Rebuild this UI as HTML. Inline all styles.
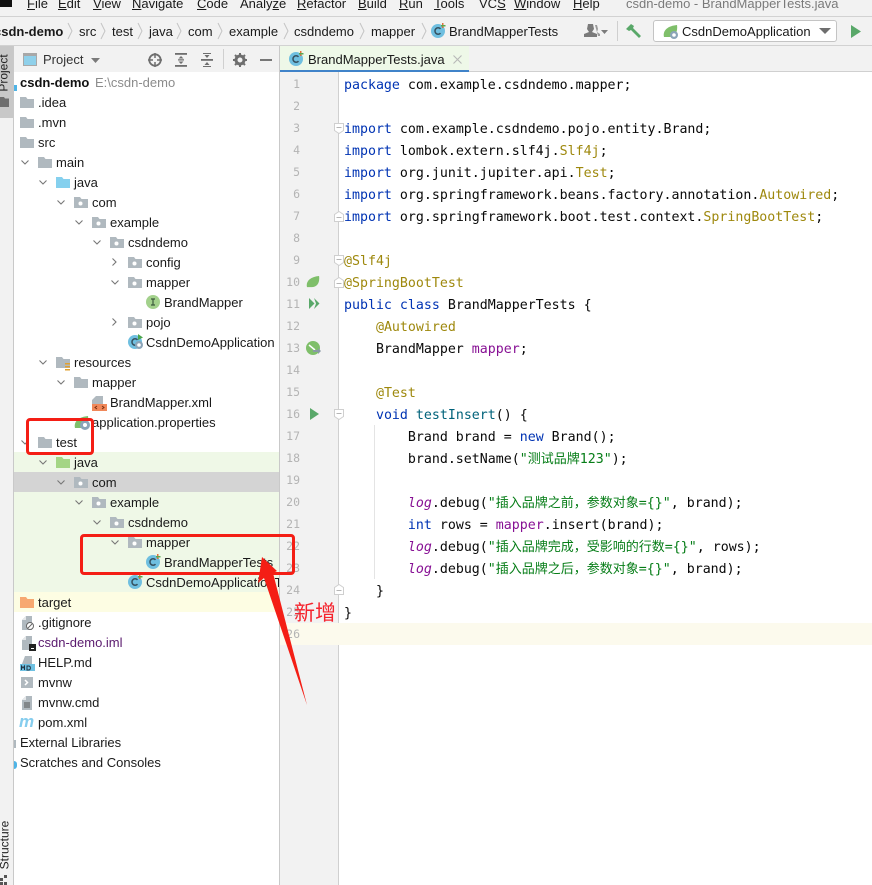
<!DOCTYPE html>
<html style="width:872px;height:885px;overflow:hidden"><head><meta charset="utf-8"><style>
html,body{margin:0;padding:0}
body{width:872px;height:885px;position:relative;overflow:hidden;background:#f2f2f2;font:13px/20px "Liberation Sans","Noto Sans CJK SC",sans-serif;color:#1a1a1a}
.b{position:absolute}
.t{position:absolute;white-space:pre;height:20px;line-height:20px}
#tree .t{margin-top:1px}
svg.i{position:absolute;overflow:visible}
#tree{position:absolute;left:0;top:0;width:279px;height:885px;overflow:hidden}
#code{position:absolute;left:344px;top:75px;width:528px;height:572px;overflow:hidden;font:13.28px/22px "DejaVu Sans Mono",monospace;color:#080808}
#code div{height:22px;white-space:pre;overflow:visible}
#nums{position:absolute;left:280px;top:73px;width:20px;text-align:right;font:11.5px/22px "DejaVu Sans Mono",monospace;color:#b4b4b4}
#nums div{height:22px}
.k{color:#0033b3}.a{color:#9e880d}.s{color:#067d17}.f{color:#871094}.m{color:#00627a}
.c{font:13px/0 "Noto Sans CJK SC",sans-serif;color:#067d17}
.lg{color:#871094;font-style:italic}
u{text-underline-offset:1px}
</style></head><body>
<svg width="0" height="0" style="position:absolute"><defs>
<symbol id="fo" viewBox="0 0 14 11"><path d="M0 0h6l1.500 2H14v9H0z" fill="#b0b9bf"/></symbol>
<symbol id="pk" viewBox="0 0 14 11"><path d="M0 0h6l1.500 2H14v9H0z" fill="#b0b9bf"/><circle cx="6.500" cy="6.500" r="2" fill="#fff"/></symbol>
<symbol id="jv" viewBox="0 0 14 11"><path d="M0 0h6l1.500 2H14v9H0z" fill="#85d0ee"/></symbol>
<symbol id="jt" viewBox="0 0 14 11"><path d="M0 0h6l1.500 2H14v9H0z" fill="#a4d585"/></symbol>
<symbol id="or" viewBox="0 0 14 11"><path d="M0 0h6l1.500 2H14v9H0z" fill="#f7a871"/></symbol>
<symbol id="dn" viewBox="0 0 8 5"><path d="M.5.500 4 4 7.500.500" fill="none" stroke="#777" stroke-width="1.100"/></symbol>
<symbol id="rt" viewBox="0 0 5 8"><path d="M.5.500 4 4 .5 7.500" fill="none" stroke="#777" stroke-width="1.100"/></symbol>
<symbol id="cl" viewBox="0 0 15 15"><circle cx="7" cy="8" r="7" fill="#6fbfe0"/><path d="M9.500 5.800A3.200 3.200 0 1 0 9.500 10.200" fill="none" stroke="#35505e" stroke-width="1.500"/><path d="M11 0h1.500v5H11z" fill="#e0703c"/><path d="M10 2h4.500v1.500H10z" fill="#5aa84f"/></symbol>
<symbol id="ap" viewBox="0 0 16 15"><circle cx="7" cy="8" r="7" fill="#6fbfe0"/><path d="M9.500 5.800A3.200 3.200 0 1 0 9.500 10.200" fill="none" stroke="#35505e" stroke-width="1.500"/><path d="M10 0l5 3.500L10 6z" fill="#4ca64c"/><circle cx="11" cy="11" r="4" fill="#8ba4b8"/><circle cx="11" cy="11" r="1.800" fill="#fff"/></symbol>
<symbol id="sp" viewBox="0 0 16 14"><path d="M1 12C-.5 6 4 1 14 0c1 7-2 12-8 12-2 0-3.500 0-5 0z" fill="#7fbf6a"/></symbol>
<symbol id="fd" viewBox="0 0 10 11"><path d="M.5.500h9v7L5 10.500.5 7.500z" fill="#fff" stroke="#cfcfcf"/><path d="M2.500 4.500h5" stroke="#b5b5b5"/></symbol>
<symbol id="fu" viewBox="0 0 10 11"><path d="M.5 10.500h9v-7L5 .5.500 3.500z" fill="#fff" stroke="#cfcfcf"/><path d="M2.500 6.500h5" stroke="#b5b5b5"/></symbol>
<symbol id="doc" viewBox="0 0 10 14"><path d="M4 0h6v14H0V4z" fill="#b0b9bf"/><path d="M4 0v4H0z" fill="#e4e7e9"/></symbol>
</defs></svg>

<!-- menu bar -->
<div class="b" style="left:0;top:0;width:872px;height:16px;background:#f2f2f2;overflow:hidden">
<div class="b" style="left:0;top:0;width:12px;height:7px;background:#111"></div>
<span class="t" style="left:27px;top:-6px"><u>F</u>ile</span>
<span class="t" style="left:58px;top:-6px"><u>E</u>dit</span>
<span class="t" style="left:93px;top:-6px"><u>V</u>iew</span>
<span class="t" style="left:132px;top:-6px"><u>N</u>avigate</span>
<span class="t" style="left:197px;top:-6px"><u>C</u>ode</span>
<span class="t" style="left:240px;top:-6px">Analy<u>z</u>e</span>
<span class="t" style="left:297px;top:-6px"><u>R</u>efactor</span>
<span class="t" style="left:358px;top:-6px"><u>B</u>uild</span>
<span class="t" style="left:399px;top:-6px"><u>R</u>un</span>
<span class="t" style="left:434px;top:-6px"><u>T</u>ools</span>
<span class="t" style="left:479px;top:-6px">VC<u>S</u></span>
<span class="t" style="left:514px;top:-6px"><u>W</u>indow</span>
<span class="t" style="left:573px;top:-6px"><u>H</u>elp</span>
<span class="t" style="left:626px;top:-6px;color:#7a7a7a">csdn-demo - BrandMapperTests.java</span>
</div>
<div class="b" style="left:0;top:16px;width:872px;height:1px;background:#d2d2d2"></div>

<!-- breadcrumb -->
<span class="t" style="left:-6px;top:22px;font-weight:bold">csdn-demo</span>
<span class="t" style="left:79px;top:22px">src</span>
<span class="t" style="left:112px;top:22px">test</span>
<span class="t" style="left:149px;top:22px">java</span>
<span class="t" style="left:188px;top:22px">com</span>
<span class="t" style="left:229px;top:22px">example</span>
<span class="t" style="left:294px;top:22px">csdndemo</span>
<span class="t" style="left:371px;top:22px">mapper</span>
<span class="t" style="left:449px;top:22px">BrandMapperTests</span>
<svg class="i" style="left:0;top:17px" width="440" height="28" fill="none" stroke="#c4c4c4" stroke-width="1"><path d="M68 6l4 8-4 8M101 6l4 8-4 8M138 6l4 8-4 8M177 6l4 8-4 8M218 6l4 8-4 8M284 6l4 8-4 8M360 6l4 8-4 8M422 6l4 8-4 8"/></svg>
<svg class="i" style="left:431px;top:23px" width="15" height="15"><use href="#cl"/></svg>
<svg class="i" style="left:584px;top:24px" width="26" height="14"><path d="M4 0h5l1 5-2 3 5 2v3H0v-3l5-2-2-3z" fill="#7b7b7b"/><path d="M11 1h2l1 4-1 3 3 2v2h-2" fill="#9a9a9a"/><path d="M17 6h7l-3.500 4z" fill="#7b7b7b"/></svg>
<div class="b" style="left:617px;top:21px;width:1px;height:20px;background:#cfcfcf"></div>
<svg class="i" style="left:626px;top:24px" width="16" height="15"><path d="M0 5 5 0l3 2-1 2 8 8-2 2-8-8-2 1z" fill="#59a869"/></svg>
<div class="b" style="left:653px;top:20px;width:182px;height:20px;background:#fff;border:1px solid #c4c4c4;border-radius:3px"></div>
<svg class="i" style="left:663px;top:25px" width="16" height="14"><use href="#sp"/><circle cx="11" cy="10" r="4" fill="#8ba4b8"/><circle cx="11" cy="10" r="1.800" fill="#fff"/></svg>
<span class="t" style="left:682px;top:22px">CsdnDemoApplication</span>
<svg class="i" style="left:819px;top:28px" width="12" height="6"><path d="M0 0h12L6 6z" fill="#6e6e6e"/></svg>
<svg class="i" style="left:851px;top:25px" width="10" height="13"><path d="M0 0l10 6.500L0 13z" fill="#59a869"/></svg>
<div class="b" style="left:0;top:45px;width:872px;height:1px;background:#d2d2d2"></div>

<!-- project header -->
<svg class="i" style="left:23px;top:53px" width="14" height="13"><rect x=".5" y=".5" width="13" height="12" fill="#8fd0ea" stroke="#a8a8a8"/><rect x="1" y="1" width="12" height="2" fill="#a8a8a8"/></svg>
<span class="t" style="left:43px;top:50px;color:#333">Project</span>
<svg class="i" style="left:91px;top:58px" width="9" height="5"><path d="M0 0h9L4.500 5z" fill="#7a7a7a"/></svg>
<svg class="i" style="left:148px;top:53px" width="14" height="14"><circle cx="7" cy="7" r="5.700" fill="none" stroke="#6e6e6e" stroke-width="1.800"/><path d="M7 0v5M7 9v5M0 7h5M9 7h5" stroke="#6e6e6e" stroke-width="1.500"/></svg>
<svg class="i" style="left:175px;top:53px" width="13" height="14" fill="#6e6e6e"><rect width="12" height="1.800"/><rect y="12" width="12" height="1.800"/><path d="M6 3l2.500 2.500h-5zM6 11 3.500 8.500h5zM3 6.300h6v1.200H3z"/></svg>
<svg class="i" style="left:201px;top:53px" width="13" height="14" fill="#6e6e6e"><rect y="6" width="12" height="1.800"/><path d="M6 5 3.500 2h5zM6 9l2.500 3h-5z"/><rect x="2" y="0" width="8" height="1"/><rect x="2" y="13" width="8" height="1"/></svg>
<div class="b" style="left:223px;top:49px;width:1px;height:20px;background:#d0d0d0"></div>
<svg class="i" style="left:233px;top:53px" width="14" height="14"><circle cx="7" cy="7" r="4" fill="none" stroke="#6e6e6e" stroke-width="3"/><path d="M7 0v3M7 11v3M0 7h3M11 7h3M2 2l2 2M10 10l2 2M12 2l-2 2M4 10l-2 2" stroke="#6e6e6e" stroke-width="2"/></svg>
<div class="b" style="left:260px;top:59px;width:12px;height:2px;background:#777"></div>

<!-- tree -->
<div class="b" style="left:14px;top:72px;width:265px;height:813px;background:#fff"></div>
<div class="b" style="left:279px;top:46px;width:1px;height:839px;background:#c9c9c9"></div>
<div class="b" style="left:14px;top:452px;width:265px;height:140px;background:#eff8e7"></div>
<div class="b" style="left:14px;top:472px;width:265px;height:20px;background:#d4d4d4"></div>
<div class="b" style="left:14px;top:592px;width:265px;height:20px;background:#fdfde3"></div>
<div id="tree">
<span class="t" style="left:20px;top:72px;font-weight:bold;color:#111">csdn-demo</span>
<span class="t" style="left:95px;top:72px;color:#8c8c8c">E:\csdn-demo</span>
<div class="b" style="left:14px;top:85px;width:3px;height:6px;background:#4fb4e6"></div>
<span class="t" style="left:38px;top:92px">.idea</span>
<span class="t" style="left:38px;top:112px">.mvn</span>
<span class="t" style="left:38px;top:132px">src</span>
<span class="t" style="left:56px;top:152px">main</span>
<span class="t" style="left:74px;top:172px">java</span>
<span class="t" style="left:92px;top:192px">com</span>
<span class="t" style="left:110px;top:212px">example</span>
<span class="t" style="left:128px;top:232px">csdndemo</span>
<span class="t" style="left:146px;top:252px">config</span>
<span class="t" style="left:146px;top:272px">mapper</span>
<span class="t" style="left:164px;top:292px">BrandMapper</span>
<span class="t" style="left:146px;top:312px">pojo</span>
<span class="t" style="left:146px;top:332px">CsdnDemoApplication</span>
<span class="t" style="left:74px;top:352px">resources</span>
<span class="t" style="left:92px;top:372px">mapper</span>
<span class="t" style="left:110px;top:392px">BrandMapper.xml</span>
<span class="t" style="left:92px;top:412px">application.properties</span>
<span class="t" style="left:56px;top:432px">test</span>
<span class="t" style="left:74px;top:452px">java</span>
<span class="t" style="left:92px;top:472px">com</span>
<span class="t" style="left:110px;top:492px">example</span>
<span class="t" style="left:128px;top:512px">csdndemo</span>
<span class="t" style="left:146px;top:532px">mapper</span>
<span class="t" style="left:164px;top:552px">BrandMapperTests</span>
<span class="t" style="left:146px;top:572px">CsdnDemoApplicationT</span>
<span class="t" style="left:38px;top:592px">target</span>
<span class="t" style="left:38px;top:612px">.gitignore</span>
<span class="t" style="left:38px;top:632px;color:#5a1a6e">csdn-demo.iml</span>
<span class="t" style="left:38px;top:652px">HELP.md</span>
<span class="t" style="left:38px;top:672px">mvnw</span>
<span class="t" style="left:38px;top:692px">mvnw.cmd</span>
<span class="t" style="left:38px;top:712px">pom.xml</span>
<span class="t" style="left:20px;top:732px">External Libraries</span>
<span class="t" style="left:20px;top:752px">Scratches and Consoles</span>

<svg class="i" style="left:20px;top:97px" width="14" height="11"><use href="#fo"/></svg>
<svg class="i" style="left:20px;top:117px" width="14" height="11"><use href="#fo"/></svg>
<svg class="i" style="left:20px;top:137px" width="14" height="11"><use href="#fo"/></svg>
<svg class="i" style="left:38px;top:157px" width="14" height="11"><use href="#fo"/></svg>
<svg class="i" style="left:56px;top:177px" width="14" height="11"><use href="#jv"/></svg>
<svg class="i" style="left:74px;top:197px" width="14" height="11"><use href="#pk"/></svg>
<svg class="i" style="left:92px;top:217px" width="14" height="11"><use href="#pk"/></svg>
<svg class="i" style="left:110px;top:237px" width="14" height="11"><use href="#pk"/></svg>
<svg class="i" style="left:128px;top:257px" width="14" height="11"><use href="#pk"/></svg>
<svg class="i" style="left:128px;top:277px" width="14" height="11"><use href="#pk"/></svg>
<svg class="i" style="left:146px;top:295px" width="14" height="14"><circle cx="7" cy="7" r="7" fill="#a3d18c"/><path d="M5 4h4M5 10h4M7 4v6" stroke="#3c5a3c" stroke-width="1.200"/></svg>
<svg class="i" style="left:128px;top:317px" width="14" height="11"><use href="#pk"/></svg>
<svg class="i" style="left:128px;top:334px" width="16" height="15"><use href="#ap"/></svg>
<svg class="i" style="left:56px;top:357px" width="14" height="14"><path d="M0 0h6l1.500 2H14v9H7v0H0z" fill="#b0b9bf"/><path d="M9 6h5v1.500H9zM9 9h5v1.500H9zM9 12h5v1.500H9z" fill="#e0a030"/></svg>
<svg class="i" style="left:74px;top:377px" width="14" height="11"><use href="#fo"/></svg>
<svg class="i" style="left:92px;top:396px" width="15" height="15"><path d="M4 0h7v8H0V4z" fill="#b0b9bf"/><rect y="8" width="15" height="7" fill="#f0885a"/><path d="M5 10l-2 1.500L5 13M10 10l2 1.500L10 13" fill="none" stroke="#7a2e10"/></svg>
<svg class="i" style="left:74px;top:416px" width="16" height="14"><use href="#sp"/><circle cx="11" cy="9" r="5" fill="#8ba4b8"/><circle cx="11" cy="9" r="2" fill="#fff"/></svg>
<svg class="i" style="left:38px;top:437px" width="14" height="11"><use href="#fo"/></svg>
<svg class="i" style="left:56px;top:457px" width="14" height="11"><use href="#jt"/></svg>
<svg class="i" style="left:74px;top:477px" width="14" height="11"><use href="#pk"/></svg>
<svg class="i" style="left:92px;top:497px" width="14" height="11"><use href="#pk"/></svg>
<svg class="i" style="left:110px;top:517px" width="14" height="11"><use href="#pk"/></svg>
<svg class="i" style="left:128px;top:537px" width="14" height="11"><use href="#pk"/></svg>
<svg class="i" style="left:146px;top:554px" width="15" height="15"><use href="#cl"/></svg>
<svg class="i" style="left:128px;top:574px" width="15" height="15"><use href="#cl"/></svg>
<svg class="i" style="left:20px;top:597px" width="14" height="11"><use href="#or"/></svg>
<svg class="i" style="left:22px;top:616px" width="14" height="15"><use href="#doc" width="10" height="14"/><circle cx="8" cy="10" r="3.500" fill="#fff" stroke="#666"/><path d="M6 12l4-4" stroke="#666"/></svg>
<svg class="i" style="left:22px;top:636px" width="14" height="15"><use href="#doc" width="10" height="14"/><rect x="7" y="8" width="7" height="7" fill="#222"/><rect x="9" y="12" width="3" height="1" fill="#fff"/></svg>
<svg class="i" style="left:20px;top:656px" width="15" height="15"><path d="M5 0h7v8H2z" fill="#b0b9bf"/><rect y="8" width="15" height="7" fill="#6fc1e2"/><path d="M1.500 14v-4l1.500 2 1.500-2v4M7 10v4h1.500c2.500 0 2.500-4 0-4z" fill="none" stroke="#234"/></svg>
<svg class="i" style="left:21px;top:677px" width="12" height="11"><rect width="12" height="11" fill="#b0b9bf"/><path d="M4 3l2.500 2.500L4 8" fill="none" stroke="#fff" stroke-width="1.500"/></svg>
<svg class="i" style="left:22px;top:696px" width="10" height="14"><use href="#doc"/><path d="M2 7h6M2 9h6M2 11h6" stroke="#555"/></svg>
<span class="t" style="left:19px;top:712px;font:italic bold 17px/18px 'Liberation Sans',sans-serif;color:#85cdee">m</span>
<div class="b" style="left:14px;top:740px;width:2px;height:8px;background:#b0b9bf"></div>
<div class="b" style="left:14px;top:761px;width:3px;height:8px;border-radius:0 4px 4px 0;background:#4fb4e6"></div>

<svg class="i" style="left:21px;top:160px" width="8" height="5"><use href="#dn"/></svg>
<svg class="i" style="left:39px;top:180px" width="8" height="5"><use href="#dn"/></svg>
<svg class="i" style="left:57px;top:200px" width="8" height="5"><use href="#dn"/></svg>
<svg class="i" style="left:75px;top:220px" width="8" height="5"><use href="#dn"/></svg>
<svg class="i" style="left:93px;top:240px" width="8" height="5"><use href="#dn"/></svg>
<svg class="i" style="left:112px;top:258px" width="5" height="8"><use href="#rt"/></svg>
<svg class="i" style="left:111px;top:280px" width="8" height="5"><use href="#dn"/></svg>
<svg class="i" style="left:112px;top:318px" width="5" height="8"><use href="#rt"/></svg>
<svg class="i" style="left:39px;top:360px" width="8" height="5"><use href="#dn"/></svg>
<svg class="i" style="left:57px;top:380px" width="8" height="5"><use href="#dn"/></svg>
<svg class="i" style="left:21px;top:440px" width="8" height="5"><use href="#dn"/></svg>
<svg class="i" style="left:39px;top:460px" width="8" height="5"><use href="#dn"/></svg>
<svg class="i" style="left:57px;top:480px" width="8" height="5"><use href="#dn"/></svg>
<svg class="i" style="left:75px;top:500px" width="8" height="5"><use href="#dn"/></svg>
<svg class="i" style="left:93px;top:520px" width="8" height="5"><use href="#dn"/></svg>
<svg class="i" style="left:111px;top:540px" width="8" height="5"><use href="#dn"/></svg>
</div>

<!-- left strip -->
<div class="b" style="left:0;top:46px;width:13px;height:839px;background:#f2f2f2"></div>
<div class="b" style="left:13px;top:46px;width:1px;height:839px;background:#c9c9c9"></div>
<div class="b" style="left:0;top:46px;width:13px;height:72px;background:#c8c8c8"></div>
<span class="t" style="left:-15px;top:63px;font-size:12px;transform:rotate(-90deg);color:#222">Project</span>
<svg class="i" style="left:0;top:97px" width="9" height="10"><path d="M0 0h4l1 1.500h4V10H0z" fill="#6e6e6e"/></svg>
<span class="t" style="left:-20px;top:835px;font-size:12px;transform:rotate(-90deg);color:#222">Structure</span>
<svg class="i" style="left:0;top:875px" width="9" height="10" fill="#555"><rect x="0" y="3" width="3" height="3"/><rect x="4" y="0" width="3" height="3"/><rect x="0" y="7" width="3" height="3"/><rect x="4" y="7" width="3" height="3"/></svg>

<!-- tab bar -->
<div class="b" style="left:280px;top:46px;width:189px;height:24px;background:#eef8e8"></div>
<div class="b" style="left:280px;top:70px;width:189px;height:2px;background:#4083c9"></div>
<div class="b" style="left:469px;top:71px;width:403px;height:1px;background:#d0d0d0"></div>
<svg class="i" style="left:289px;top:51px" width="15" height="15"><use href="#cl"/></svg>
<span class="t" style="left:308px;top:50px">BrandMapperTests.java</span>
<svg class="i" style="left:453px;top:55px" width="9" height="9"><path d="M.5.500l8 8M8.500.500l-8 8" stroke="#b8b8b8" stroke-width="1.100"/></svg>

<!-- editor -->
<div class="b" style="left:338px;top:72px;width:534px;height:813px;background:#fff"></div>
<div class="b" style="left:280px;top:72px;width:58px;height:813px;background:#f2f2f2"></div>
<div class="b" style="left:338px;top:72px;width:1px;height:813px;background:#d0d0d0"></div>
<div class="b" style="left:280px;top:623px;width:592px;height:22px;background:#fcfaed"></div>
<div class="b" style="left:374px;top:425px;width:1px;height:154px;background:#e4e4e4"></div>

<div id="nums"><div>1</div><div>2</div><div>3</div><div>4</div><div>5</div><div>6</div><div>7</div><div>8</div><div>9</div><div>10</div><div>11</div><div>12</div><div>13</div><div>14</div><div>15</div><div>16</div><div>17</div><div>18</div><div>19</div><div>20</div><div>21</div><div>22</div><div>23</div><div>24</div><div>25</div><div>26</div></div>

<svg class="i" style="left:334px;top:123px" width="10" height="11"><use href="#fd"/></svg>
<svg class="i" style="left:334px;top:211px" width="10" height="11"><use href="#fu"/></svg>
<svg class="i" style="left:334px;top:255px" width="10" height="11"><use href="#fd"/></svg>
<svg class="i" style="left:334px;top:277px" width="10" height="11"><use href="#fu"/></svg>
<svg class="i" style="left:334px;top:409px" width="10" height="11"><use href="#fd"/></svg>
<svg class="i" style="left:334px;top:584px" width="10" height="11"><use href="#fu"/></svg>

<svg class="i" style="left:306px;top:276px" width="15" height="13"><use href="#sp"/></svg>
<svg class="i" style="left:309px;top:298px" width="11" height="11" fill="#59a869"><path d="M0 0l5.500 5.500L0 11z"/><path d="M5 0l5.500 5.500L5 11l2-5.500z"/></svg>
<svg class="i" style="left:306px;top:341px" width="15" height="14"><circle cx="7" cy="7" r="7" fill="#7fbf6a"/><path d="M3 4l6 5" stroke="#fff" stroke-width="1.500"/><path d="M7 9h5V7l3 3-3 3v-2H7z" fill="#8a9aa5"/></svg>
<svg class="i" style="left:310px;top:408px" width="9" height="12"><path d="M0 0l9 6-9 6z" fill="#59a869"/></svg>

<div id="code"><div><span class="k">package</span> com.example.csdndemo.mapper;</div><div></div><div><span class="k">import</span> com.example.csdndemo.pojo.entity.Brand;</div><div><span class="k">import</span> lombok.extern.slf4j.<span class="a">Slf4j</span>;</div><div><span class="k">import</span> org.junit.jupiter.api.<span class="a">Test</span>;</div><div><span class="k">import</span> org.springframework.beans.factory.annotation.<span class="a">Autowired</span>;</div><div><span class="k">import</span> org.springframework.boot.test.context.<span class="a">SpringBootTest</span>;</div><div></div><div><span class="a">@Slf4j</span></div><div><span class="a">@SpringBootTest</span></div><div><span class="k">public class</span> BrandMapperTests {</div><div>    <span class="a">@Autowired</span></div><div>    BrandMapper <span class="f">mapper</span>;</div><div></div><div>    <span class="a">@Test</span></div><div>    <span class="k">void</span> <span class="m">testInsert</span>() {</div><div>        Brand brand = <span class="k">new</span> Brand();</div><div>        brand.setName(<span class="s">"</span><span class="c">测试品牌</span><span class="s">123"</span>);</div><div></div><div>        <span class="lg">log</span>.debug(<span class="s">"</span><span class="c">插入品牌之前，参数对象</span><span class="s">={}"</span>, brand);</div><div>        <span class="k">int</span> rows = <span class="f">mapper</span>.insert(brand);</div><div>        <span class="lg">log</span>.debug(<span class="s">"</span><span class="c">插入品牌完成，受影响的行数</span><span class="s">={}"</span>, rows);</div><div>        <span class="lg">log</span>.debug(<span class="s">"</span><span class="c">插入品牌之后，参数对象</span><span class="s">={}"</span>, brand);</div><div>    }</div><div>}</div></div>

<!-- annotations -->
<div class="b" style="left:26px;top:418px;width:62px;height:31px;border:3px solid #f41e15;border-radius:4px"></div>
<div class="b" style="left:80px;top:534px;width:209px;height:35px;border:3px solid #f41e15;border-radius:4px"></div>
<svg class="i" style="left:0;top:0" width="872" height="885"><polygon points="262,557 277,571 273,573 307,705 264,578 258,583" fill="#f41e15"/></svg>
<span class="t" style="left:294px;top:600px;height:24px;font:21px/24px 'Noto Sans CJK SC',sans-serif;color:#f5232d">新增</span>
</body></html>
